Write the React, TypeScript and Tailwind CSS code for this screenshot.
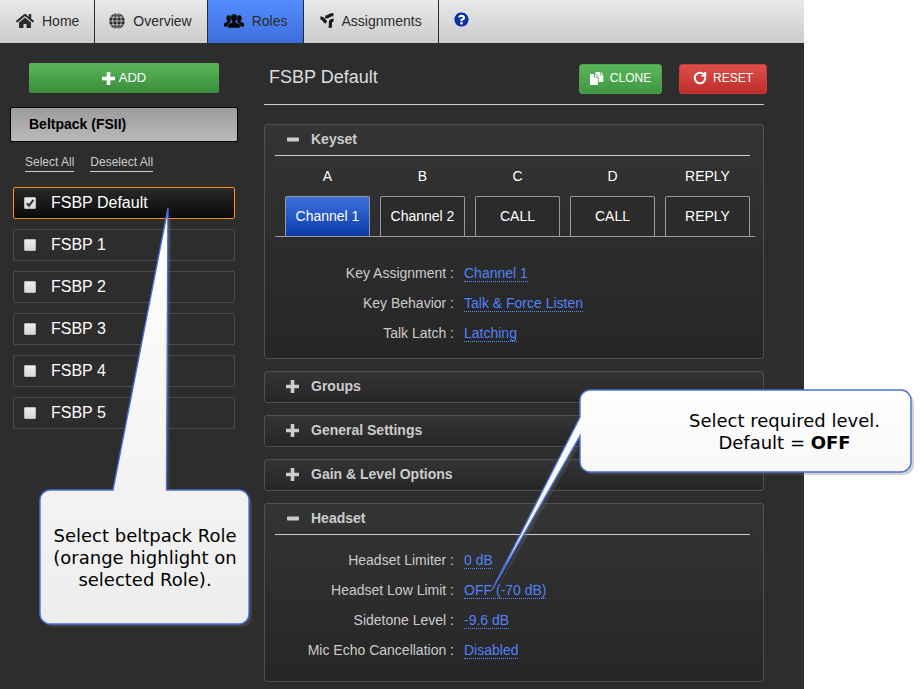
import { useState, type ReactNode } from 'react';
import { RotateCw } from 'lucide-react';
import { FaHome, FaQuestionCircle } from 'react-icons/fa';

const NAV_ITEMS = [
  { label: 'Home', icon: <FaHome className="size-[18px] text-[#2b2b2b]" />, cell: 'pl-4 pr-[15px]' },
  { label: 'Overview', icon: <GlobeIcon />, cell: 'pl-[14px] pr-[15px]' },
  { label: 'Roles', icon: <GroupIcon />, cell: 'pl-4 pr-[15px]' },
  { label: 'Assignments', icon: <BranchIcon />, cell: 'pl-4 pr-4' },
];

const ROLES = ['FSBP Default', 'FSBP 1', 'FSBP 2', 'FSBP 3', 'FSBP 4', 'FSBP 5'];

const KEYS = [
  { name: 'A', value: 'Channel 1' },
  { name: 'B', value: 'Channel 2' },
  { name: 'C', value: 'CALL' },
  { name: 'D', value: 'CALL' },
  { name: 'REPLY', value: 'REPLY' },
];

const KEY_SETTINGS: [string, string][] = [
  ['Key Assignment', 'Channel 1'],
  ['Key Behavior', 'Talk & Force Listen'],
  ['Talk Latch', 'Latching'],
];

const HEADSET_SETTINGS: [string, string][] = [
  ['Headset Limiter', '0 dB'],
  ['Headset Low Limit', 'OFF (-70 dB)'],
  ['Sidetone Level', '-9.6 dB'],
  ['Mic Echo Cancellation', 'Disabled'],
];

function GlobeIcon() {
  return (
    <svg viewBox="0 0 16 16" className="size-4" aria-hidden="true">
      <circle cx="8" cy="8" r="7.8" fill="#2b2b2b" />
      <g fill="none" stroke="#d8d8d8" strokeWidth="0.8">
        <path d="M8 0v16M0 8h16M1.5 4.2h13M1.5 11.8h13" />
        <ellipse cx="8" cy="8" rx="4.3" ry="7.8" />
      </g>
    </svg>
  );
}

function GroupIcon() {
  return (
    <svg viewBox="0 0 20 14" className="h-[14px] w-5" aria-hidden="true">
      <g fill="#050505">
        <ellipse cx="4.8" cy="4.2" rx="2.4" ry="3" />
        <ellipse cx="15.2" cy="4.2" rx="2.4" ry="3" />
        <path d="M0 12.6V10.4Q0 9.2 1.2 8.8L3.8 7.6V6h2.6v3L5 12.6zM20 12.6v-2.2q0-1.2-1.2-1.6L16.2 7.600V6h-2.600v3L15 12.6z" />
      </g>
      <path
        d="M10 0C7.6 0 6.5 1.500 6.700 3.700 6.800 5.400 7.500 6.500 8.200 7.200v1.200L5 9.700Q3.800 10.200 3.800 11.400V14h12.400v-2.600q0-1.200-1.200-1.700l-3.200-1.300V7.200c.7-.7 1.400-1.800 1.500-3.500C13.500 1.500 12.400 0 10 0z"
        fill="#050505"
        stroke="#4a7ff0"
        strokeWidth="0.5"
      />
    </svg>
  );
}

function BranchIcon() {
  return (
    <svg viewBox="0 0 14 15" className="h-[15px] w-[14px]" aria-hidden="true">
      <g fill="none" stroke="#1c1c1c" strokeWidth="3.200">
        <path d="M0.4 4.8 Q2.600 4.800 3.600 6.600 T6.400 9.400" />
        <path d="M5.200 3.800 Q7.400 4.400 8.800 3 T13.400 1.600" />
        <path d="M13.600 7.400 Q10.200 7 10.400 9.800 T10 14.800" />
      </g>
    </svg>
  );
}

function PlusIcon() {
  return (
    <svg viewBox="0 0 13 13" className="size-[13px]" fill="currentColor" aria-hidden="true">
      <path d="M4.700 0h3.600v4.700H13v3.600H8.300V13H4.700V8.300H0V4.700h4.700z" />
    </svg>
  );
}

function MinusIcon() {
  return (
    <svg viewBox="0 0 13 13" className="size-[13px]" fill="currentColor" aria-hidden="true">
      <rect x="1" y="4.5" width="12" height="4" rx="0.8" />
    </svg>
  );
}

function CopyIcon() {
  return (
    <svg viewBox="0 0 14 13" className="h-[13px] w-[14px]" fill="#fff" aria-hidden="true">
      <path d="M5.5 0h4.6v3.2h3.2V10H8.6V4.6L5.5 2z" />
      <path d="M10.8 0l2.5 2.5h-2.5z" />
      <path d="M0 2h4v3.6h3.8V13H0z" />
      <path d="M4.8 2l3 2.9h-3z" />
    </svg>
  );
}

function Panel({ title, open, children }: { title: string; open?: boolean; children?: ReactNode }) {
  return (
    <section className="rounded-[3px] border border-[#505050] bg-linear-to-b from-[#343434] to-[#262626] pr-2 pl-[10px]">
      <h2 className={open ? 'mr-[5px] border-b border-[#ccc]' : ''}>
        <button
          type="button"
          aria-expanded={!!open}
          className="flex h-[30px] w-full items-center gap-3 pb-0.5 pl-[11px] text-sm font-bold text-[#ccc]"
        >
          {open ? <MinusIcon /> : <PlusIcon />}
          {title}
        </button>
      </h2>
      {children}
    </section>
  );
}

function Settings({ rows }: { rows: [string, string][] }) {
  return (
    <dl>
      {rows.map(([label, value]) => (
        <div key={label} className="grid h-[30px] grid-cols-[179px_1fr] items-center gap-[10px]">
          <dt className="text-right text-[#ccc]">{label} :</dt>
          <dd className="flex">
            <a href="#" className="border-b border-dotted border-[#5a8cff] leading-4 text-[#5183f8]">
              {value}
            </a>
          </dd>
        </div>
      ))}
    </dl>
  );
}

function RoleItem({ name, selected, onToggle }: { name: string; selected: boolean; onToggle: () => void }) {
  return (
    <label
      className={`flex h-8 items-center gap-[15px] rounded-[2px] border pl-[10px] text-base text-white ${
        selected ? 'border-[#ff8c1e] bg-linear-to-b from-[#2a2a2a] to-[#0a0a0a]' : 'border-[#4b4b4b]'
      }`}
    >
      <span className="relative size-3">
        <input
          type="checkbox"
          checked={selected}
          onChange={onToggle}
          className="block size-3 appearance-none rounded-[1px] border border-[#bbb] bg-linear-to-b from-[#eee] to-[#d8d8d8]"
        />
        {selected && (
          <svg viewBox="0 0 12 12" className="pointer-events-none absolute inset-0 size-3" aria-hidden="true">
            <path d="M2.8 6.2 5 8.6 9.4 2.8" fill="none" stroke="#333" strokeWidth="2" />
          </svg>
        )}
      </span>
      {name}
    </label>
  );
}

// Balloon outline with a translucent offset shadow behind it
function Balloon({ path, id, className, viewBox }: { path: string; id: string; className: string; viewBox: string }) {
  return (
    <svg viewBox={viewBox} className={className} aria-hidden="true">
      <defs>
        <linearGradient id={id} x1="0" y1="0" x2="0" y2="1">
          <stop offset="0" stopColor="#fff" />
          <stop offset="1" stopColor="#ededed" />
        </linearGradient>
      </defs>
      <path d={path} transform="translate(3 3)" fill="#696969" fillOpacity="0.31" />
      <path d={path} fill={`url(#${id})`} stroke="#4a6fd8" strokeWidth="1.4" />
    </svg>
  );
}

function App() {
  const [selected, setSelected] = useState<string[]>(['FSBP Default']);
  const [activeKey, setActiveKey] = useState('A');

  const toggleRole = (name: string) => {
    setSelected((prev) => (prev.includes(name) ? prev.filter((r) => r !== name) : [...prev, name]));
  };

  return (
    <div className="relative min-h-screen bg-white pr-[120px] font-['Liberation_Sans',Arial,sans-serif] text-sm">
      <div className="min-h-screen bg-[#2d2d2d] pb-1.5">
        <nav className="flex h-[43px] bg-linear-to-b from-[#e9e9e9] to-[#cbcbcb] text-[#2b2b2b]">
          {NAV_ITEMS.map((item) => (
            <a
              key={item.label}
              href="#"
              className={`flex items-center gap-2 border-r border-[#2b2b2b] pb-0.5 ${item.cell} ${
                item.label === 'Roles' ? 'bg-linear-to-b from-[#568cff] to-[#3d6fdc]' : ''
              }`}
            >
              {item.icon}
              {item.label}
            </a>
          ))}
          <a href="#" aria-label="Help" className="flex items-center px-[15px] pb-1">
            <FaQuestionCircle className="size-[15px] rounded-full bg-white text-[#0a32a0]" />
          </a>
        </nav>

        <div className="flex">
          <aside className="w-[238px] shrink-0 pt-5 pl-[10px]">
            <div className="px-[19px]">
              <button
                type="button"
                className="flex h-[30px] w-full items-center justify-center gap-1 rounded-[2px] bg-linear-to-b from-[#5bb75b] to-[#3b8d3b] text-[13px] text-white"
              >
                <PlusIcon />
                ADD
              </button>
            </div>
            <h2 className="mt-[14px] flex h-[35px] items-center rounded-[2px] border border-black bg-linear-to-b from-[#9c9c9c] to-[#bababa] pb-0.5 pl-[18px] font-bold text-black">
              Beltpack (FSII)
            </h2>
            <div className="mt-3 flex gap-4 pl-[15px] text-xs leading-[17px] text-[#ccc]">
              <a href="#" className="border-b border-[#ccc]">Select All</a>
              <a href="#" className="border-b border-[#ccc]">Deselect All</a>
            </div>
            <div className="mt-[15px] flex flex-col gap-[10px] px-[3px]">
              {ROLES.map((name) => (
                <RoleItem
                  key={name}
                  name={name}
                  selected={selected.includes(name)}
                  onToggle={() => toggleRole(name)}
                />
              ))}
            </div>
          </aside>

          <main className="ml-[26px] min-w-0 flex-1 pr-[37px]">
            <div className="flex h-[61px] items-start pt-[21px] pl-[5px]">
              <h1 className="flex-1 text-lg leading-[26px] text-[#ddd]">FSBP Default</h1>
              <button
                type="button"
                className="flex h-[30px] w-[83px] items-center justify-center gap-1.5 rounded-[3px] border border-[#4ba04b] bg-linear-to-b from-[#5bb75b] to-[#3f963f] pb-0.5 text-xs text-white"
              >
                <CopyIcon />
                CLONE
              </button>
              <button
                type="button"
                className="ml-[17px] flex h-[30px] w-[88px] items-center justify-center gap-1.5 rounded-[3px] border border-[#c83c38] bg-linear-to-b from-[#dc504c] to-[#bd2c28] pb-0.5 text-xs text-white"
              >
                <RotateCw className="size-[14px]" strokeWidth={3.5} />
                RESET
              </button>
            </div>

            <div className="mr-[3px] flex flex-col gap-3 border-t border-[#ccc] pt-[19px]">
              <Panel title="Keyset" open>
                <div className="grid grid-cols-5 gap-x-[10px] border-b border-[#999] pr-[5px] pl-[10px] text-white">
                  {KEYS.map((key) => (
                    <div key={key.name} className="text-center">
                      <div className="leading-10">{key.name}</div>
                      <button
                        type="button"
                        onClick={() => setActiveKey(key.name)}
                        className={`h-10 w-full rounded-t-[2px] border border-b-0 border-[#999] pb-0.5 whitespace-nowrap ${
                          key.name === activeKey ? 'bg-linear-to-b from-[#3c6fdd] to-[#0c3cac]' : 'bg-[#2b2b2b]'
                        }`}
                      >
                        {key.value}
                      </button>
                    </div>
                  ))}
                </div>
                <div className="pt-[21px] pb-[10px]">
                  <Settings rows={KEY_SETTINGS} />
                </div>
              </Panel>
              <Panel title="Groups" />
              <Panel title="General Settings" />
              <Panel title="Gain & Level Options" />
              <Panel title="Headset" open>
                <div className="pt-[10px] pb-4">
                  <Settings rows={HEADSET_SETTINGS} />
                </div>
              </Panel>
            </div>
          </main>
        </div>
      </div>

      <div className="pointer-events-none absolute top-[204px] left-9">
        <Balloon
          id="role-fill"
          viewBox="36 204 220 428"
          className="h-[428px] w-[220px]"
          path="M50 490H113L168 208L166.500 490H239A10 10 0 0 1 249 500V614A10 10 0 0 1 239 624H50A10 10 0 0 1 40 614V500A10 10 0 0 1 50 490Z"
        />
        <p className="absolute top-[286px] left-1 flex h-[134px] w-[210px] items-center justify-center pt-0.5 text-center font-['DejaVu_Sans',Verdana,sans-serif] text-lg leading-[22px] whitespace-nowrap text-black">
          Select beltpack Role
          <br />
          (orange highlight on
          <br />
          selected Role).
        </p>
      </div>

      <div className="pointer-events-none absolute top-[386px] left-[488px]">
        <Balloon
          id="level-fill"
          viewBox="488 386 430 212"
          className="h-[212px] w-[430px]"
          path="M590 390H901A10 10 0 0 1 911 400V462A10 10 0 0 1 901 472H590A10 10 0 0 1 580 462V436L492 590L580 417V400A10 10 0 0 1 590 390Z"
        />
        <p className="absolute top-1 left-[92px] w-[331px] pt-5 pl-[78px] text-center font-['DejaVu_Sans',Verdana,sans-serif] text-lg leading-[22px] whitespace-nowrap text-black">
          Select required level.
          <br />
          Default = <b>OFF</b>
        </p>
      </div>
    </div>
  );
}

export default App;
